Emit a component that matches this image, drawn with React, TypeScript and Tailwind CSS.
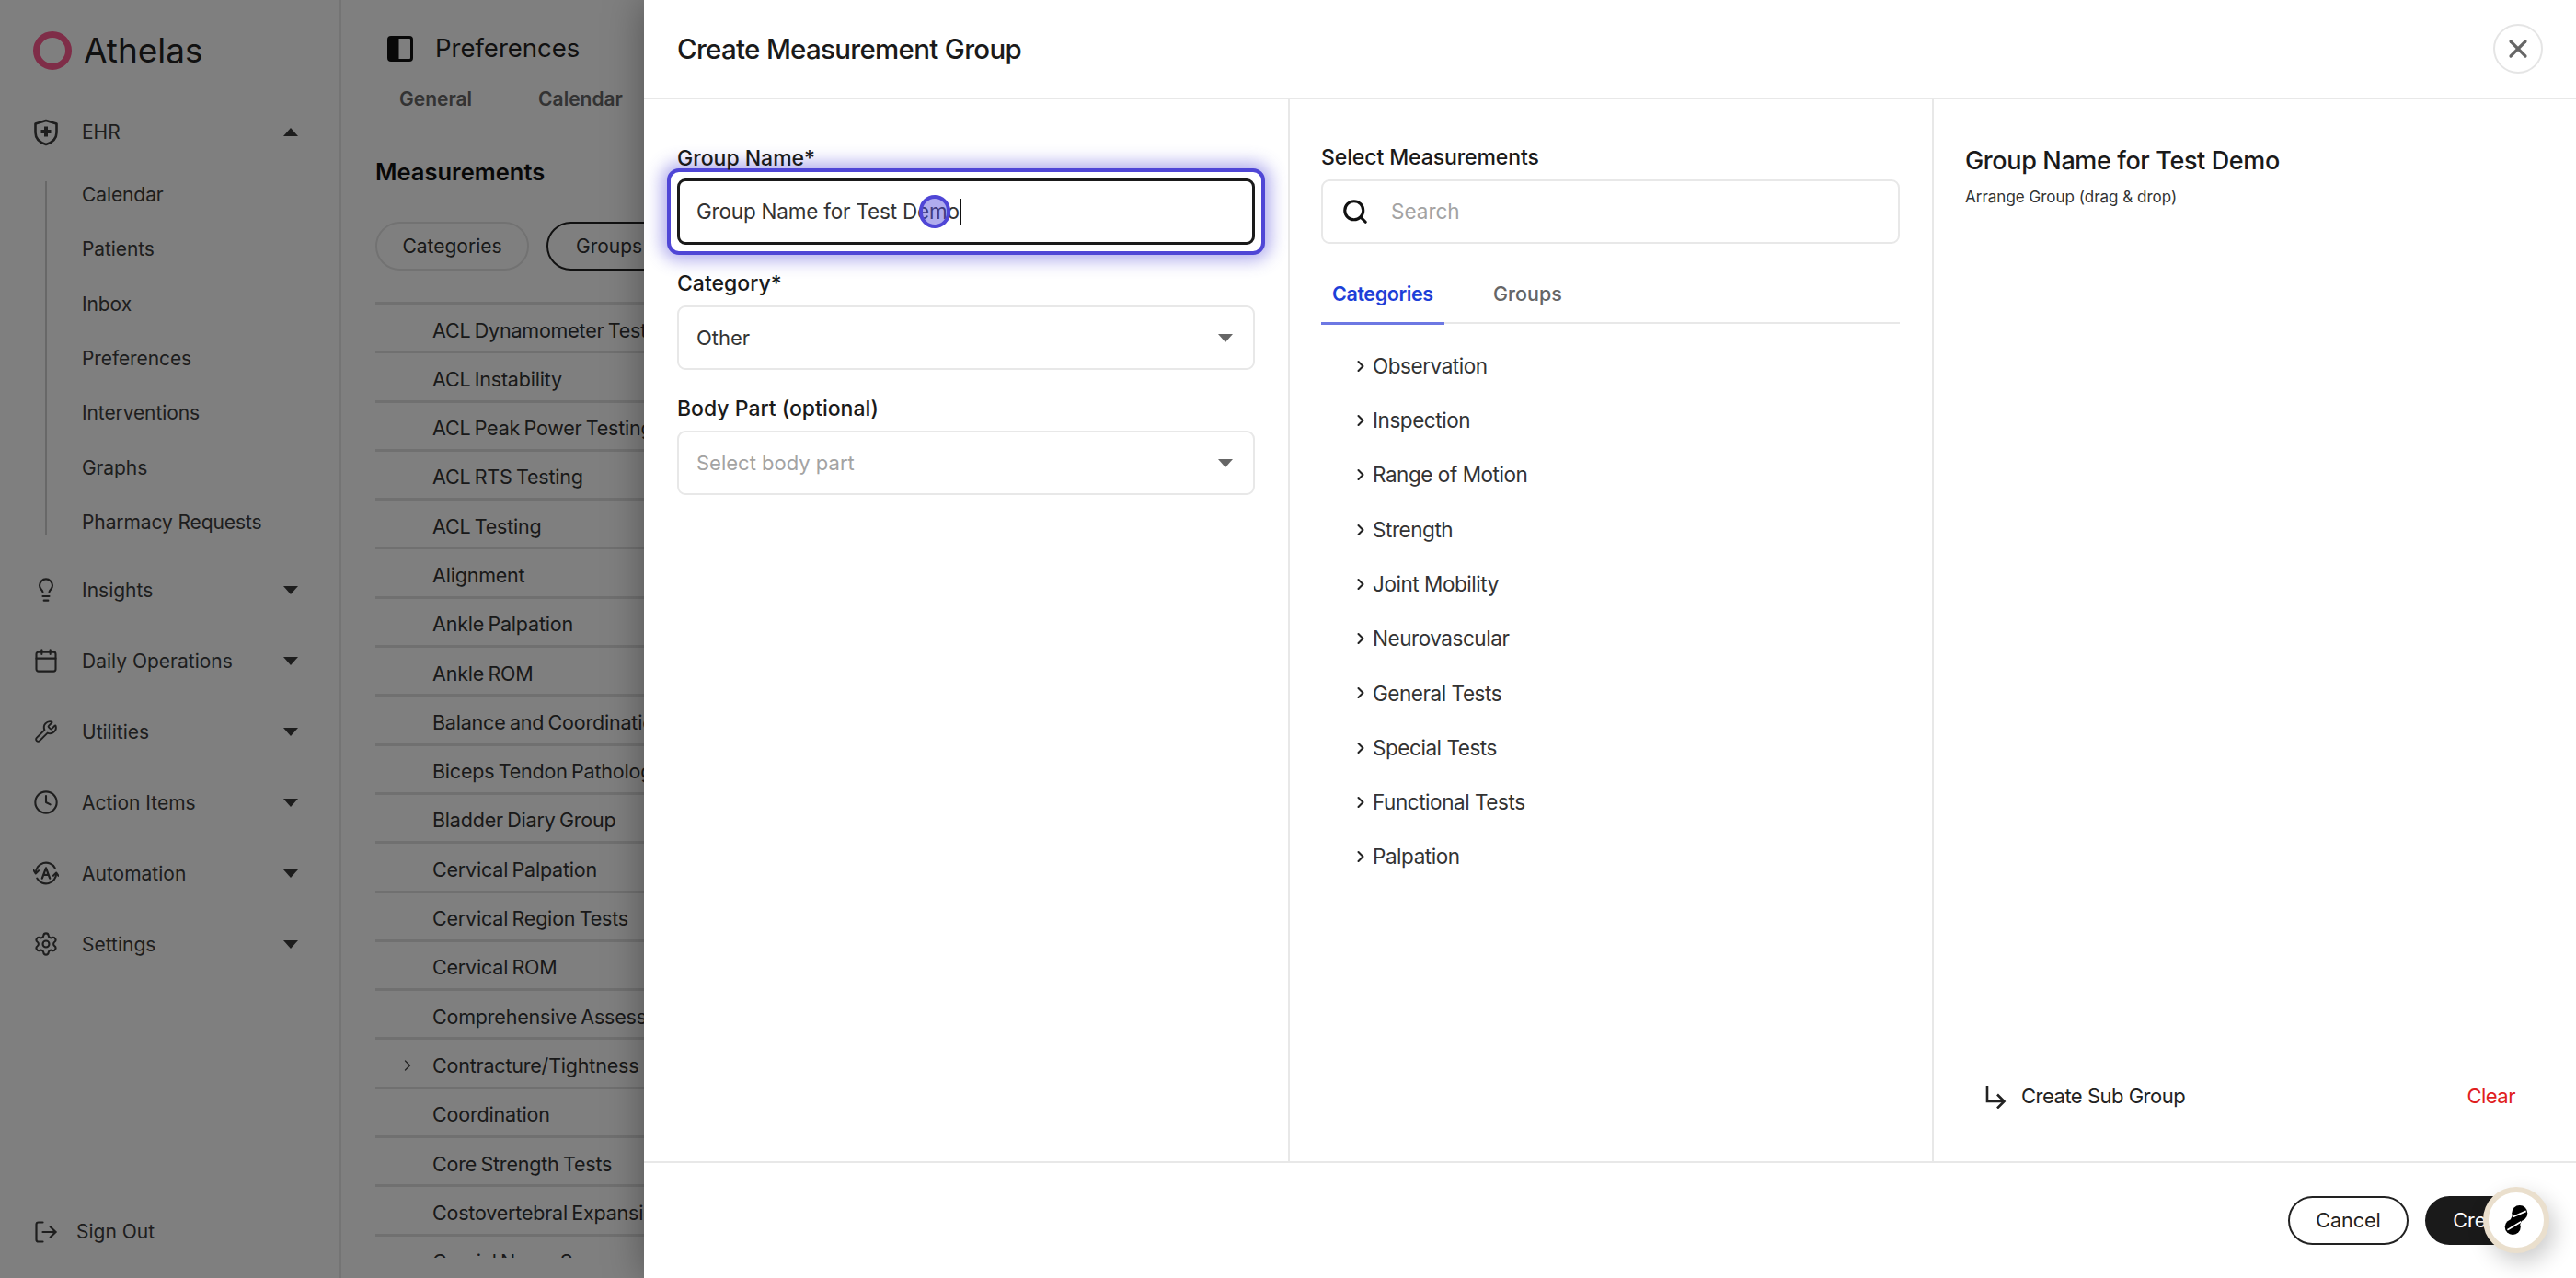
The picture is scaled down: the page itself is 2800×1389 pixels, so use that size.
import React from 'react';
import {
  Calendar,
  ChevronRight,
  Clock,
  Lightbulb,
  LogOut,
  Search,
  Settings,
  Wrench,
  X,
} from 'lucide-react';

const subItems = ['Calendar', 'Patients', 'Inbox', 'Preferences', 'Interventions', 'Graphs', 'Pharmacy Requests'];

const measurements = [
  'ACL Dynamometer Testing',
  'ACL Instability',
  'ACL Peak Power Testing',
  'ACL RTS Testing',
  'ACL Testing',
  'Alignment',
  'Ankle Palpation',
  'Ankle ROM',
  'Balance and Coordination',
  'Biceps Tendon Pathology',
  'Bladder Diary Group',
  'Cervical Palpation',
  'Cervical Region Tests',
  'Cervical ROM',
  'Comprehensive Assessment',
  'Contracture/Tightness',
  'Coordination',
  'Core Strength Tests',
  'Costovertebral Expansion',
  'Cranial Nerve Screen',
];

const categories = [
  'Observation',
  'Inspection',
  'Range of Motion',
  'Strength',
  'Joint Mobility',
  'Neurovascular',
  'General Tests',
  'Special Tests',
  'Functional Tests',
  'Palpation',
];

const Caret = ({ up = false, className = '' }: { up?: boolean; className?: string }) => (
  <svg width="16" height="9" viewBox="0 0 16 9" className={className}>
    <polygon points={up ? '8,0 16,9 0,9' : '0,0 16,0 8,9'} fill="currentColor" />
  </svg>
);

const ShieldIcon = () => (
  <svg width="28" height="30" viewBox="0 0 28 30" fill="none">
    <path d="M14 2 L25.5 5.5 V15 C25.5 21.5 20.5 26 14 28 C7.5 26 2.5 21.5 2.5 15 V5.5 Z" stroke="currentColor" strokeWidth="2.6" strokeLinejoin="round" />
    <path d="M14 8.5 V19.5 M8.5 14 H19.5" stroke="currentColor" strokeWidth="4" />
  </svg>
);

const AutomationIcon = () => (
  <svg width="30" height="28" viewBox="0 0 30 28" fill="none" stroke="currentColor" strokeWidth="2.2" strokeLinecap="round" strokeLinejoin="round">
    <path d="M3 14 A12 12 0 0 1 25.5 8" />
    <path d="M27 14 A12 12 0 0 1 4.5 20" />
    <path d="M0.5 10.5 L3 14.5 L6.5 11" />
    <path d="M23.5 17 L27 13.5 L29.5 17" />
    <path d="M10.5 20 L15 8 L19.5 20 M12 16 H18" strokeWidth="2.4" />
  </svg>
);

const PanelIcon = () => (
  <svg width="28" height="28" viewBox="0 0 28 28" fill="none">
    <rect x="1.5" y="1.5" width="25" height="25" rx="2.5" stroke="#111" strokeWidth="3" />
    <rect x="1.5" y="1.5" width="11" height="25" fill="#111" />
  </svg>
);

const PeanutIcon = () => (
  <svg width="26" height="32" viewBox="0 0 24 30">
    <circle cx="15.5" cy="8" r="8" fill="#000" />
    <circle cx="8.5" cy="22" r="8" fill="#000" />
    <path d="M15.5 8 L8.5 22" stroke="#000" strokeWidth="11" />
    <path d="M8.7 11.7 L22 6 M3 25 L17 16.7" stroke="#fff" strokeWidth="1.6" />
  </svg>
);

const SubGroupArrow = () => (
  <svg width="24" height="26" viewBox="0 0 24 26" fill="none" stroke="#222" strokeWidth="2.6">
    <path d="M3 1 V18 H21" />
    <path d="M14 10.5 L21.5 18 L14 25.5" />
  </svg>
);

const NavRow = ({ icon, label, up = false }: { icon: React.ReactNode; label: string; up?: boolean }) => (
  <div className="flex h-[77px] items-center pl-[36px] pr-[45px] text-[#3d3d3d]">
    <span className="flex w-[28px] justify-center">{icon}</span>
    <span className="ml-[25px] flex-1 text-[21px] leading-[29px]">{label}</span>
    <Caret up={up} className="text-[#3a3a3a]" />
  </div>
);

const Sidebar = () => (
  <aside className="flex h-full w-[371px] shrink-0 flex-col border-r-2 border-[#e8e8e8]">
    <div className="flex h-[105px] items-start pl-[36px] pt-[34px]">
      <div className="h-[42px] w-[42px] rounded-full border-[7px] border-[#ff5a90]" />
      <span className="ml-[13px] text-[37px] leading-[42px] text-[#222]">Athelas</span>
    </div>
    <NavRow icon={<ShieldIcon />} label="EHR" up />
    <div className="ml-[49px] mt-[15px] mb-[21px] flex flex-col gap-[30.33px] border-l-2 border-[#d0d0d0] pl-[38px]">
      {subItems.map((item) => (
        <div key={item} className="text-[21px] leading-[29px] tracking-[-0.1px] text-[#3d3d3d]">
          {item}
        </div>
      ))}
    </div>
    <NavRow icon={<Lightbulb size={28} strokeWidth={1.8} />} label="Insights" />
    <NavRow icon={<Calendar size={28} strokeWidth={1.8} />} label="Daily Operations" />
    <NavRow icon={<Wrench size={26} strokeWidth={1.8} />} label="Utilities" />
    <NavRow icon={<Clock size={28} strokeWidth={1.8} />} label="Action Items" />
    <NavRow icon={<AutomationIcon />} label="Automation" />
    <NavRow icon={<Settings size={28} strokeWidth={1.8} />} label="Settings" />
    <div className="mt-auto mb-[36px] flex items-center pl-[36px] text-[#3d3d3d]">
      <LogOut size={28} strokeWidth={1.9} />
      <span className="ml-[19px] text-[21px] leading-[29px]">Sign Out</span>
    </div>
  </aside>
);

const MainContent = () => (
  <main className="flex h-[1367px] min-w-0 flex-1 flex-col overflow-hidden pl-[37px]">
    <div className="mt-[34px] flex h-[38px] items-center pl-[13px]">
      <PanelIcon />
      <span className="ml-[24px] text-[27.5px] text-[#222]">Preferences</span>
    </div>
    <div className="mt-[22px] flex gap-[72px] pl-[26px] text-[21px] font-semibold leading-[28px] text-[#666]">
      <span>General</span>
      <span>Calendar</span>
    </div>
    <div className="mt-[48px] text-[25.5px] font-semibold leading-[34px] text-[#111]">Measurements</div>
    <div className="mt-[37px] flex gap-[19px]">
      <div className="flex h-[53px] w-[167px] items-center justify-center rounded-full border-2 border-[#e5e5e5] text-[21px] text-[#333]">
        Categories
      </div>
      <div className="flex h-[53px] w-[200px] shrink-0 items-center rounded-full border-2 border-[#222] pl-[30px] text-[21px] text-[#333]">
        Groups
      </div>
    </div>
    <div className="mt-[34px] border-t-[3px] border-[#e0e0e0]">
      {measurements.map((name) => (
        <div key={name} className="flex h-[53.3px] items-center whitespace-nowrap border-b-[3px] border-[#e0e0e0] pl-[62px] pt-[5px] text-[21.5px] tracking-[-0.2px] text-[#333] [word-spacing:-1.5px]">
          <span className="relative">
            {name === 'Contracture/Tightness' && (
              <ChevronRight size={20} strokeWidth={1.6} className="absolute -left-[37px] top-[6px] text-[#444]" />
            )}
            {name}
          </span>
        </div>
      ))}
    </div>
  </main>
);

const FormColumn = () => (
  <section className="w-[700px] px-[36px] pt-[50px]">
    <label className="block text-[23px] font-medium leading-[28px] text-[#1a1a1a]">Group Name*</label>
    <div className="-mx-[11px] -mt-[3px] rounded-[13px] border-[4px] border-[#4f46d6] bg-white p-[7px] shadow-[0_0_18px_6px_rgba(79,70,214,0.45)]">
      <div className="relative flex h-[72px] items-center rounded-[9px] border-[3px] border-[#1a1a1a] pl-[18px] text-[22.5px] tracking-[-0.2px] text-[#333]">
        Group Name for Test Demo
        <span className="h-[29px] w-[2px] bg-[#111]" />
        <span className="absolute left-[260px] top-[15px] h-[36px] w-[34px] rounded-full border-[4px] border-[#4f46d6] bg-[#4f46d6]/45" />
      </div>
    </div>
    <label className="mt-[17px] block text-[23px] font-medium leading-[28px] text-[#1a1a1a]">Category*</label>
    <div className="mt-[10px] flex h-[70px] items-center justify-between rounded-[9px] border-2 border-[#e8e8e8] pl-[19px] pr-[22px] text-[22px] text-[#333]">
      Other
      <Caret className="text-[#666]" />
    </div>
    <label className="mt-[28px] block text-[23px] font-medium leading-[28px] text-[#1a1a1a]">Body Part (optional)</label>
    <div className="mt-[10px] flex h-[70px] items-center justify-between rounded-[9px] border-2 border-[#e8e8e8] pl-[19px] pr-[22px] text-[22px] text-[#a3a3a3]">
      Select body part
      <Caret className="text-[#666]" />
    </div>
  </section>
);

const MeasurementColumn = () => (
  <section className="w-[700px] border-l-2 border-[#e8e8e8] pl-[34px] pr-[35px] pt-[49px]">
    <div className="text-[23px] font-medium leading-[28px] tracking-[-0.1px] text-[#1a1a1a]">Select Measurements</div>
    <div className="mt-[10px] flex h-[70px] items-center rounded-[9px] border-2 border-[#e8e8e8] pl-[20px] text-[22.5px] text-[#a3a3a3]">
      <Search size={30} strokeWidth={2.5} className="text-[#111]" />
      <span className="ml-[24px]">Search</span>
    </div>
    <div className="mt-[32px] flex h-[55px] border-b-2 border-[#e8e8e8]">
      <div className="h-[56px] w-[134px] border-b-[3px] border-[#6d78e3] pl-[12px] text-[21.5px] font-semibold leading-[44px] tracking-[-0.4px] text-[#1d3fd8]">
        Categories
      </div>
      <div className="ml-[53px] text-[21.5px] font-medium leading-[44px] text-[#666]">Groups</div>
    </div>
    <div className="mt-[16px] flex flex-col pl-[32px]">
      {categories.map((name) => (
        <div key={name} className="flex h-[59.3px] items-center text-[22.5px] tracking-[-0.45px] text-[#333]">
          <ChevronRight size={20} strokeWidth={2.5} className="ml-[1px] text-[#222]" />
          <span className="ml-[3px]">{name}</span>
        </div>
      ))}
    </div>
  </section>
);

const PreviewColumn = () => (
  <section className="flex w-[700px] flex-col border-l-2 border-[#e8e8e8] pl-[34px] pr-[66px] pt-[50px]">
    <div className="text-[27px] font-medium leading-[34px] tracking-[-0.37px] text-[#1a1a1a]">Group Name for Test Demo</div>
    <div className="mt-[11px] text-[17px] leading-[22px] text-[#333]">Arrange Group (drag &amp; drop)</div>
    <div className="mt-auto mb-[54px] flex items-center justify-between pl-[21px]">
      <div className="flex items-center text-[22px] tracking-[-0.5px] text-[#222]">
        <SubGroupArrow />
        <span className="ml-[16px]">Create Sub Group</span>
      </div>
      <span className="text-[22px] tracking-[-0.5px] text-[#e01e1e]">Clear</span>
    </div>
  </section>
);

const Modal = () => (
  <div className="absolute right-0 top-0 flex h-full w-[2100px] flex-col bg-white shadow-[0_0_40px_rgba(0,0,0,0.35)]">
    <header className="flex h-[108px] shrink-0 items-center justify-between border-b-2 border-[#e8e8e8] pl-[36px] pr-[36px]">
      <h1 className="text-[29.5px] font-medium tracking-[-0.7px] text-[#1a1a1a]">Create Measurement Group</h1>
      <button className="flex h-[54px] w-[54px] items-center justify-center rounded-full border-2 border-[#e5e5e5] text-[#666]">
        <X size={32} strokeWidth={2.4} />
      </button>
    </header>
    <div className="flex min-h-0 flex-1">
      <FormColumn />
      <MeasurementColumn />
      <PreviewColumn />
    </div>
    <footer className="relative flex h-[127px] shrink-0 items-start justify-end gap-[18px] border-t-2 border-[#e8e8e8] pr-[36px] pt-[36px]">
      <button className="flex h-[53px] w-[131px] items-center justify-center rounded-full border-2 border-[#222] text-[21.5px] text-[#222]">
        Cancel
      </button>
      <button className="flex h-[53px] w-[128px] items-center justify-center rounded-full bg-[#1a1a1a] text-[21.5px] text-white">
        Create
      </button>
      <div className="absolute bottom-[27px] right-[29px] flex h-[72px] w-[72px] items-center justify-center rounded-full border-[6px] border-[#eadfcd] bg-white shadow-[6px_10px_24px_rgba(0,0,0,0.2)]">
        <PeanutIcon />
      </div>
    </footer>
  </div>
);

export default function App() {
  return (
    <div className="relative flex h-[1389px] w-[2800px] overflow-hidden bg-white font-['Inter',sans-serif]">
      <Sidebar />
      <MainContent />
      <div className="absolute inset-0 bg-black/50" />
      <Modal />
    </div>
  );
}
